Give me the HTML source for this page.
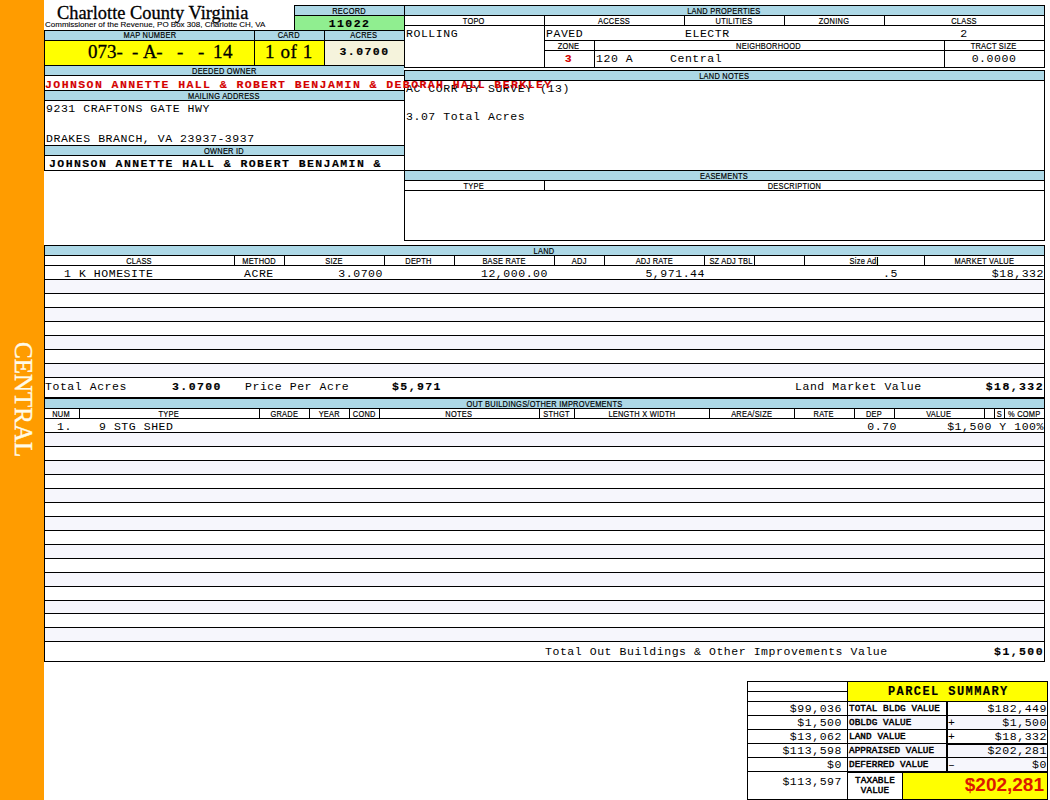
<!DOCTYPE html>
<html><head><meta charset="utf-8"><style>
html,body{margin:0;padding:0;overflow:hidden;}
body{width:1050px;height:800px;overflow:hidden;position:relative;background:#fff;}
.f{position:absolute;}
.t{position:absolute;white-space:pre;line-height:20px;height:20px;color:#000;z-index:2;}
.pb{font-family:"Liberation Mono",monospace;font-size:9.3px;font-weight:normal;letter-spacing:0.1px;-webkit-text-stroke:0.45px #000;}
.m{font-family:"Liberation Mono",monospace;font-size:11.5px;letter-spacing:0.55px;}
.mb{font-family:"Liberation Mono",monospace;font-size:11.5px;font-weight:bold;letter-spacing:1.42px;-webkit-text-stroke:0.15px currentColor;}
.s{font-family:"Liberation Sans",sans-serif;font-size:9.3px;}
.sc{display:inline-block;transform:scaleX(0.8);-webkit-text-stroke:0.2px #000;letter-spacing:0.3px;}
.sb{font-family:"Liberation Sans",sans-serif;font-size:9.3px;}
.serif{font-family:"Liberation Serif",serif;font-size:18.4px;}
.big{font-family:"Liberation Sans",sans-serif;font-size:19px;font-weight:bold;color:#dc1800;}
.central{position:absolute;left:7px;top:342px;width:32px;height:120px;writing-mode:vertical-rl;font-family:"Liberation Serif",serif;font-size:25px;line-height:32px;color:#fffbe8;-webkit-text-stroke:0.4px #fffbe8;}
</style></head><body>
<div class="f" style="left:0px;top:0px;width:44px;height:800px;background:#ff9c00"></div>
<div class="t serif" style="left:57px;top:3px;-webkit-text-stroke:0.3px #000;">Charlotte County Virginia</div>
<div class="t s" style="left:45px;top:15px;font-size:8px;-webkit-text-stroke:0.1px #000;">Commissioner of the Revenue, PO Box 308, Charlotte CH, VA</div>
<div class="f" style="left:295px;top:16px;width:109px;height:14px;background:#90ee90"></div>
<div class="f" style="left:295px;top:6px;width:109px;height:9px;background:#add8e6"></div>
<div class="t sb" style="left:295px;top:1px;width:108px;text-align:center;"><span class="sc">RECORD</span></div>
<div class="t mb" style="left:295px;top:14px;width:109px;text-align:center;">11022</div>
<div class="f" style="left:294px;top:5px;width:751px;height:1px;background:#000"></div>
<div class="f" style="left:294px;top:15px;width:111px;height:1px;background:#000"></div>
<div class="f" style="left:294px;top:5px;width:1px;height:26px;background:#000"></div>
<div class="f" style="left:45px;top:31px;width:359px;height:9px;background:#add8e6"></div>
<div class="t sb" style="left:45px;top:25px;width:209px;text-align:center;"><span class="sc">MAP NUMBER</span></div>
<div class="t sb" style="left:254px;top:25px;width:70px;text-align:center;"><span class="sc">CARD</span></div>
<div class="t sb" style="left:324px;top:25px;width:80px;text-align:center;"><span class="sc">ACRES</span></div>
<div class="f" style="left:45px;top:41px;width:279px;height:24px;background:#ffff00"></div>
<div class="f" style="left:325px;top:41px;width:79px;height:24px;background:#f5f3dc"></div>
<div class="f" style="left:44px;top:30px;width:361px;height:1px;background:#000"></div>
<div class="f" style="left:44px;top:40px;width:361px;height:1px;background:#000"></div>
<div class="f" style="left:44px;top:65px;width:361px;height:1px;background:#000"></div>
<div class="f" style="left:254px;top:30px;width:1px;height:36px;background:#000"></div>
<div class="f" style="left:324px;top:30px;width:1px;height:36px;background:#000"></div>
<div class="t serif" style="left:88px;top:42px;font-size:19px;letter-spacing:0.6px;-webkit-text-stroke:0.3px #000;letter-spacing:0;">073-</div>
<div class="t serif" style="left:132px;top:42px;font-size:19px;letter-spacing:0.6px;-webkit-text-stroke:0.3px #000;">-</div>
<div class="t serif" style="left:143px;top:42px;font-size:19px;letter-spacing:0.6px;-webkit-text-stroke:0.3px #000;letter-spacing:-0.5px;">A-</div>
<div class="t serif" style="left:177px;top:42px;font-size:19px;letter-spacing:0.6px;-webkit-text-stroke:0.3px #000;">-</div>
<div class="t serif" style="left:198px;top:42px;font-size:19px;letter-spacing:0.6px;-webkit-text-stroke:0.3px #000;">-</div>
<div class="t serif" style="left:213px;top:42px;font-size:19px;letter-spacing:0.6px;-webkit-text-stroke:0.3px #000;">14</div>
<div class="t serif" style="left:254px;top:42px;width:70px;text-align:center;font-size:19px;letter-spacing:0.6px;-webkit-text-stroke:0.3px #000;">1 of 1</div>
<div class="t mb" style="left:325px;top:42px;width:79px;text-align:center;">3.0700</div>
<div class="f" style="left:45px;top:66px;width:359px;height:9px;background:#add8e6"></div>
<div class="t sb" style="left:45px;top:61px;width:358px;text-align:center;"><span class="sc">DEEDED OWNER</span></div>
<div class="f" style="left:44px;top:75px;width:361px;height:1px;background:#000"></div>
<div class="t mb" style="left:45px;top:75px;color:#d40000;z-index:5;">JOHNSON ANNETTE HALL &amp; ROBERT BENJAMIN &amp; DEBORAH HALL BERKLEY</div>
<div class="f" style="left:44px;top:90px;width:361px;height:1px;background:#000"></div>
<div class="f" style="left:45px;top:91px;width:359px;height:9px;background:#add8e6"></div>
<div class="t sb" style="left:45px;top:86px;width:358px;text-align:center;"><span class="sc">MAILING ADDRESS</span></div>
<div class="f" style="left:44px;top:100px;width:361px;height:1px;background:#000"></div>
<div class="t m" style="left:46px;top:99px;">9231 CRAFTONS GATE HWY</div>
<div class="t m" style="left:46px;top:129px;">DRAKES BRANCH, VA 23937-3937</div>
<div class="f" style="left:44px;top:145px;width:361px;height:1px;background:#000"></div>
<div class="f" style="left:45px;top:146px;width:359px;height:9px;background:#add8e6"></div>
<div class="t sb" style="left:45px;top:141px;width:358px;text-align:center;"><span class="sc">OWNER ID</span></div>
<div class="f" style="left:44px;top:155px;width:361px;height:1px;background:#000"></div>
<div class="t mb" style="left:49px;top:154px;">JOHNSON ANNETTE HALL &amp; ROBERT BENJAMIN &amp;</div>
<div class="f" style="left:44px;top:170px;width:361px;height:1px;background:#000"></div>
<div class="f" style="left:44px;top:30px;width:1px;height:141px;background:#000"></div>
<div class="f" style="left:405px;top:6px;width:639px;height:9px;background:#add8e6"></div>
<div class="t sb" style="left:405px;top:1px;width:638px;text-align:center;"><span class="sc">LAND PROPERTIES</span></div>
<div class="f" style="left:404px;top:15px;width:641px;height:1px;background:#000"></div>
<div class="t s" style="left:404px;top:11px;width:140px;text-align:center;"><span class="sc">TOPO</span></div>
<div class="t s" style="left:544px;top:11px;width:140px;text-align:center;"><span class="sc">ACCESS</span></div>
<div class="t s" style="left:684px;top:11px;width:100px;text-align:center;"><span class="sc">UTILITIES</span></div>
<div class="t s" style="left:784px;top:11px;width:100px;text-align:center;"><span class="sc">ZONING</span></div>
<div class="t s" style="left:884px;top:11px;width:160px;text-align:center;"><span class="sc">CLASS</span></div>
<div class="f" style="left:404px;top:25px;width:641px;height:1px;background:#000"></div>
<div class="f" style="left:544px;top:15px;width:1px;height:53px;background:#000"></div>
<div class="f" style="left:684px;top:15px;width:1px;height:11px;background:#000"></div>
<div class="f" style="left:784px;top:15px;width:1px;height:11px;background:#000"></div>
<div class="f" style="left:884px;top:15px;width:1px;height:11px;background:#000"></div>
<div class="t m" style="left:406px;top:24px;">ROLLING</div>
<div class="t m" style="left:546px;top:24px;">PAVED</div>
<div class="t m" style="left:685px;top:24px;">ELECTR</div>
<div class="t m" style="left:884px;top:24px;width:160px;text-align:center;">2</div>
<div class="f" style="left:544px;top:40px;width:501px;height:1px;background:#000"></div>
<div class="t s" style="left:544px;top:36px;width:50px;text-align:center;"><span class="sc">ZONE</span></div>
<div class="t sb" style="left:594px;top:36px;width:350px;text-align:center;"><span class="sc">NEIGHBORHOOD</span></div>
<div class="t sb" style="left:944px;top:36px;width:100px;text-align:center;"><span class="sc">TRACT SIZE</span></div>
<div class="f" style="left:544px;top:50px;width:501px;height:1px;background:#000"></div>
<div class="f" style="left:594px;top:40px;width:1px;height:28px;background:#000"></div>
<div class="f" style="left:944px;top:40px;width:1px;height:28px;background:#000"></div>
<div class="t mb" style="left:544px;top:49px;width:50px;text-align:center;color:#d40000;">3</div>
<div class="t m" style="left:596px;top:49px;">120 A</div>
<div class="t m" style="left:670px;top:49px;">Central</div>
<div class="t m" style="left:944px;top:49px;width:100px;text-align:center;">0.0000</div>
<div class="f" style="left:404px;top:67px;width:641px;height:1px;background:#000"></div>
<div class="f" style="left:404px;top:5px;width:1px;height:63px;background:#000"></div>
<div class="f" style="left:1044px;top:5px;width:1px;height:63px;background:#000"></div>
<div class="f" style="left:404px;top:70px;width:641px;height:1px;background:#000"></div>
<div class="f" style="left:405px;top:71px;width:639px;height:9px;background:#add8e6"></div>
<div class="t sb" style="left:405px;top:66px;width:638px;text-align:center;"><span class="sc">LAND NOTES</span></div>
<div class="f" style="left:404px;top:80px;width:641px;height:1px;background:#000"></div>
<div class="t m" style="left:406px;top:79px;">AC CORR BY SURVEY (13)</div>
<div class="t m" style="left:406px;top:107px;">3.07 Total Acres</div>
<div class="f" style="left:44px;top:170px;width:1001px;height:1px;background:#000"></div>
<div class="f" style="left:404px;top:70px;width:1px;height:171px;background:#000"></div>
<div class="f" style="left:1044px;top:70px;width:1px;height:171px;background:#000"></div>
<div class="f" style="left:405px;top:171px;width:639px;height:9px;background:#add8e6"></div>
<div class="t sb" style="left:405px;top:166px;width:638px;text-align:center;"><span class="sc">EASEMENTS</span></div>
<div class="f" style="left:404px;top:180px;width:641px;height:1px;background:#000"></div>
<div class="t sb" style="left:404px;top:176px;width:140px;text-align:center;"><span class="sc">TYPE</span></div>
<div class="t sb" style="left:544px;top:176px;width:500px;text-align:center;"><span class="sc">DESCRIPTION</span></div>
<div class="f" style="left:544px;top:180px;width:1px;height:11px;background:#000"></div>
<div class="f" style="left:404px;top:190px;width:641px;height:1px;background:#000"></div>
<div class="f" style="left:404px;top:240px;width:641px;height:1px;background:#000"></div>
<div class="f" style="left:45px;top:246px;width:999px;height:9px;background:#add8e6"></div>
<div class="t sb" style="left:45px;top:241px;width:998px;text-align:center;"><span class="sc">LAND</span></div>
<div class="f" style="left:44px;top:245px;width:1001px;height:1px;background:#000"></div>
<div class="f" style="left:44px;top:255px;width:1001px;height:1px;background:#000"></div>
<div class="f" style="left:44px;top:265px;width:1001px;height:1px;background:#000"></div>
<div class="f" style="left:234px;top:255px;width:1px;height:11px;background:#000"></div>
<div class="f" style="left:284px;top:255px;width:1px;height:11px;background:#000"></div>
<div class="f" style="left:384px;top:255px;width:1px;height:11px;background:#000"></div>
<div class="f" style="left:454px;top:255px;width:1px;height:11px;background:#000"></div>
<div class="f" style="left:554px;top:255px;width:1px;height:11px;background:#000"></div>
<div class="f" style="left:604px;top:255px;width:1px;height:11px;background:#000"></div>
<div class="f" style="left:704px;top:255px;width:1px;height:11px;background:#000"></div>
<div class="f" style="left:754px;top:255px;width:1px;height:11px;background:#000"></div>
<div class="f" style="left:804px;top:255px;width:1px;height:11px;background:#000"></div>
<div class="f" style="left:924px;top:255px;width:1px;height:11px;background:#000"></div>
<div class="t sb" style="left:44px;top:251px;width:190px;text-align:center;"><span class="sc">CLASS</span></div>
<div class="t sb" style="left:234px;top:251px;width:50px;text-align:center;"><span class="sc">METHOD</span></div>
<div class="t sb" style="left:284px;top:251px;width:100px;text-align:center;"><span class="sc">SIZE</span></div>
<div class="t sb" style="left:384px;top:251px;width:70px;text-align:center;"><span class="sc">DEPTH</span></div>
<div class="t sb" style="left:454px;top:251px;width:100px;text-align:center;"><span class="sc">BASE RATE</span></div>
<div class="t sb" style="left:554px;top:251px;width:50px;text-align:center;"><span class="sc">ADJ</span></div>
<div class="t sb" style="left:604px;top:251px;width:100px;text-align:center;"><span class="sc">ADJ RATE</span></div>
<div class="t sb" style="left:704px;top:251px;width:50px;text-align:center;"><span class="sc">SZ ADJ TBL</span></div>
<div class="t s" style="left:804px;top:251px;width:120px;text-align:center;"><span class="sc">Size Adj</span></div>
<div class="t sb" style="left:924px;top:251px;width:120px;text-align:center;"><span class="sc">MARKET VALUE</span></div>
<div class="f" style="left:45px;top:280px;width:999px;height:13px;background:#f6f6fc"></div>
<div class="f" style="left:45px;top:308px;width:999px;height:13px;background:#f6f6fc"></div>
<div class="f" style="left:45px;top:336px;width:999px;height:13px;background:#f6f6fc"></div>
<div class="f" style="left:45px;top:364px;width:999px;height:13px;background:#f6f6fc"></div>
<div class="f" style="left:44px;top:279px;width:1001px;height:1px;background:#000"></div>
<div class="f" style="left:44px;top:293px;width:1001px;height:1px;background:#000"></div>
<div class="f" style="left:44px;top:307px;width:1001px;height:1px;background:#000"></div>
<div class="f" style="left:44px;top:321px;width:1001px;height:1px;background:#000"></div>
<div class="f" style="left:44px;top:335px;width:1001px;height:1px;background:#000"></div>
<div class="f" style="left:44px;top:349px;width:1001px;height:1px;background:#000"></div>
<div class="f" style="left:44px;top:363px;width:1001px;height:1px;background:#000"></div>
<div class="f" style="left:44px;top:377px;width:1001px;height:1px;background:#000"></div>
<div class="t m" style="left:64px;top:264px;">1 K HOMESITE</div>
<div class="t m" style="left:244px;top:264px;">ACRE</div>
<div class="t m" style="right:667px;top:264px;text-align:right;">3.0700</div>
<div class="t m" style="right:502px;top:264px;text-align:right;">12,000.00</div>
<div class="t m" style="right:345px;top:264px;text-align:right;">5,971.44</div>
<div class="t m" style="right:152px;top:264px;text-align:right;">.5</div>
<div class="t m" style="right:6px;top:264px;text-align:right;">$18,332</div>
<div class="t m" style="left:45px;top:377px;">Total Acres</div>
<div class="t mb" style="left:172px;top:377px;">3.0700</div>
<div class="t m" style="left:245px;top:377px;">Price Per Acre</div>
<div class="t mb" style="left:392px;top:377px;">$5,971</div>
<div class="t m" style="left:795px;top:377px;">Land Market Value</div>
<div class="f" style="left:877px;top:257px;width:1px;height:8px;background:#000"></div>
<div class="t mb" style="right:6px;top:377px;text-align:right;">$18,332</div>
<div class="f" style="left:44px;top:397px;width:1001px;height:1px;background:#000"></div>
<div class="f" style="left:44px;top:245px;width:1px;height:153px;background:#000"></div>
<div class="f" style="left:1044px;top:245px;width:1px;height:153px;background:#000"></div>
<div class="f" style="left:44px;top:398px;width:1001px;height:1px;background:#000"></div>
<div class="f" style="left:45px;top:399px;width:999px;height:9px;background:#add8e6"></div>
<div class="t sb" style="left:45px;top:394px;width:998px;text-align:center;"><span class="sc">OUT BUILDINGS/OTHER IMPROVEMENTS</span></div>
<div class="f" style="left:44px;top:408px;width:1001px;height:1px;background:#000"></div>
<div class="f" style="left:44px;top:418px;width:1001px;height:1px;background:#000"></div>
<div class="f" style="left:79px;top:408px;width:1px;height:11px;background:#000"></div>
<div class="f" style="left:259px;top:408px;width:1px;height:11px;background:#000"></div>
<div class="f" style="left:309px;top:408px;width:1px;height:11px;background:#000"></div>
<div class="f" style="left:349px;top:408px;width:1px;height:11px;background:#000"></div>
<div class="f" style="left:379px;top:408px;width:1px;height:11px;background:#000"></div>
<div class="f" style="left:539px;top:408px;width:1px;height:11px;background:#000"></div>
<div class="f" style="left:574px;top:408px;width:1px;height:11px;background:#000"></div>
<div class="f" style="left:709px;top:408px;width:1px;height:11px;background:#000"></div>
<div class="f" style="left:794px;top:408px;width:1px;height:11px;background:#000"></div>
<div class="f" style="left:854px;top:408px;width:1px;height:11px;background:#000"></div>
<div class="f" style="left:894px;top:408px;width:1px;height:11px;background:#000"></div>
<div class="f" style="left:984px;top:408px;width:1px;height:11px;background:#000"></div>
<div class="f" style="left:994px;top:408px;width:1px;height:11px;background:#000"></div>
<div class="f" style="left:1004px;top:408px;width:1px;height:11px;background:#000"></div>
<div class="t sb" style="left:44px;top:404px;width:35px;text-align:center;"><span class="sc">NUM</span></div>
<div class="t sb" style="left:79px;top:404px;width:180px;text-align:center;"><span class="sc">TYPE</span></div>
<div class="t sb" style="left:259px;top:404px;width:50px;text-align:center;"><span class="sc">GRADE</span></div>
<div class="t sb" style="left:309px;top:404px;width:40px;text-align:center;"><span class="sc">YEAR</span></div>
<div class="t sb" style="left:349px;top:404px;width:30px;text-align:center;"><span class="sc">COND</span></div>
<div class="t sb" style="left:379px;top:404px;width:160px;text-align:center;"><span class="sc">NOTES</span></div>
<div class="t sb" style="left:539px;top:404px;width:35px;text-align:center;"><span class="sc">STHGT</span></div>
<div class="t sb" style="left:574px;top:404px;width:135px;text-align:center;"><span class="sc">LENGTH X WIDTH</span></div>
<div class="t sb" style="left:709px;top:404px;width:85px;text-align:center;"><span class="sc">AREA/SIZE</span></div>
<div class="t sb" style="left:794px;top:404px;width:60px;text-align:center;"><span class="sc">RATE</span></div>
<div class="t sb" style="left:854px;top:404px;width:40px;text-align:center;"><span class="sc">DEP</span></div>
<div class="t sb" style="left:894px;top:404px;width:90px;text-align:center;"><span class="sc">VALUE</span></div>
<div class="t sb" style="left:994px;top:404px;width:10px;text-align:center;"><span class="sc">S</span></div>
<div class="t sb" style="left:1004px;top:404px;width:40px;text-align:center;"><span class="sc">% COMP</span></div>
<div class="f" style="left:45px;top:433px;width:999px;height:13px;background:#f6f6fc"></div>
<div class="f" style="left:45px;top:461px;width:999px;height:13px;background:#f6f6fc"></div>
<div class="f" style="left:45px;top:489px;width:999px;height:13px;background:#f6f6fc"></div>
<div class="f" style="left:45px;top:517px;width:999px;height:13px;background:#f6f6fc"></div>
<div class="f" style="left:45px;top:545px;width:999px;height:13px;background:#f6f6fc"></div>
<div class="f" style="left:45px;top:573px;width:999px;height:13px;background:#f6f6fc"></div>
<div class="f" style="left:45px;top:601px;width:999px;height:12px;background:#f6f6fc"></div>
<div class="f" style="left:45px;top:628px;width:999px;height:13px;background:#f6f6fc"></div>
<div class="f" style="left:44px;top:432px;width:1001px;height:1px;background:#000"></div>
<div class="f" style="left:44px;top:446px;width:1001px;height:1px;background:#000"></div>
<div class="f" style="left:44px;top:460px;width:1001px;height:1px;background:#000"></div>
<div class="f" style="left:44px;top:474px;width:1001px;height:1px;background:#000"></div>
<div class="f" style="left:44px;top:488px;width:1001px;height:1px;background:#000"></div>
<div class="f" style="left:44px;top:502px;width:1001px;height:1px;background:#000"></div>
<div class="f" style="left:44px;top:516px;width:1001px;height:1px;background:#000"></div>
<div class="f" style="left:44px;top:530px;width:1001px;height:1px;background:#000"></div>
<div class="f" style="left:44px;top:544px;width:1001px;height:1px;background:#000"></div>
<div class="f" style="left:44px;top:558px;width:1001px;height:1px;background:#000"></div>
<div class="f" style="left:44px;top:572px;width:1001px;height:1px;background:#000"></div>
<div class="f" style="left:44px;top:586px;width:1001px;height:1px;background:#000"></div>
<div class="f" style="left:44px;top:600px;width:1001px;height:1px;background:#000"></div>
<div class="f" style="left:44px;top:613px;width:1001px;height:1px;background:#000"></div>
<div class="f" style="left:44px;top:627px;width:1001px;height:1px;background:#000"></div>
<div class="f" style="left:44px;top:641px;width:1001px;height:1px;background:#000"></div>
<div class="t m" style="left:57px;top:417px;">1.</div>
<div class="t m" style="left:99px;top:417px;">9 STG SHED</div>
<div class="t m" style="right:153px;top:417px;text-align:right;">0.70</div>
<div class="t m" style="right:6px;top:417px;text-align:right;">$1,500 Y 100%</div>
<div class="t m" style="left:545px;top:642px;">Total Out Buildings &amp; Other Improvements Value</div>
<div class="t mb" style="right:6px;top:642px;text-align:right;">$1,500</div>
<div class="f" style="left:44px;top:661px;width:1001px;height:1px;background:#000"></div>
<div class="f" style="left:44px;top:398px;width:1px;height:264px;background:#000"></div>
<div class="f" style="left:1044px;top:398px;width:1px;height:264px;background:#000"></div>
<div class="f" style="left:848px;top:682px;width:199px;height:19px;background:#ffff00"></div>
<div class="t mb" style="left:888px;top:682px;font-size:12px;">PARCEL SUMMARY</div>
<div class="f" style="left:747px;top:681px;width:301px;height:1px;background:#000"></div>
<div class="f" style="left:747px;top:691px;width:101px;height:1px;background:#000"></div>
<div class="f" style="left:747px;top:701px;width:301px;height:1px;background:#000"></div>
<div class="f" style="left:848px;top:716px;width:98px;height:13px;background:#f6f6fc"></div>
<div class="f" style="left:948px;top:716px;width:99px;height:13px;background:#f6f6fc"></div>
<div class="f" style="left:848px;top:744px;width:98px;height:27px;background:#f6f6fc"></div>
<div class="f" style="left:948px;top:745px;width:99px;height:26px;background:#f6f6fc"></div>
<div class="f" style="left:747px;top:715px;width:301px;height:1px;background:#000"></div>
<div class="f" style="left:747px;top:729px;width:301px;height:1px;background:#000"></div>
<div class="f" style="left:747px;top:757px;width:301px;height:1px;background:#000"></div>
<div class="f" style="left:747px;top:743px;width:301px;height:1px;background:#000"></div>
<div class="f" style="left:947px;top:744px;width:101px;height:1px;background:#000"></div>
<div class="f" style="left:747px;top:771px;width:301px;height:1px;background:#000"></div>
<div class="f" style="left:847px;top:772px;width:201px;height:1px;background:#000"></div>
<div class="f" style="left:903px;top:773px;width:144px;height:26px;background:#ffff00"></div>
<div class="f" style="left:747px;top:681px;width:1px;height:119px;background:#000"></div>
<div class="f" style="left:847px;top:681px;width:1px;height:119px;background:#000"></div>
<div class="f" style="left:946px;top:701px;width:2px;height:71px;background:#000"></div>
<div class="f" style="left:902px;top:771px;width:1px;height:29px;background:#000"></div>
<div class="f" style="left:1047px;top:681px;width:1px;height:119px;background:#000"></div>
<div class="f" style="left:747px;top:799px;width:301px;height:1px;background:#000"></div>
<div class="t m" style="right:208px;top:699px;text-align:right;">$99,036</div>
<div class="t pb" style="left:849px;top:699px;">TOTAL BLDG VALUE</div>
<div class="t m" style="right:3px;top:699px;text-align:right;">$182,449</div>
<div class="t m" style="right:208px;top:713px;text-align:right;">$1,500</div>
<div class="t pb" style="left:849px;top:713px;">OBLDG VALUE</div>
<div class="t m" style="left:948px;top:713px;">+</div>
<div class="t m" style="right:3px;top:713px;text-align:right;">$1,500</div>
<div class="t m" style="right:208px;top:727px;text-align:right;">$13,062</div>
<div class="t pb" style="left:849px;top:727px;">LAND VALUE</div>
<div class="t m" style="left:948px;top:727px;">+</div>
<div class="t m" style="right:3px;top:727px;text-align:right;">$18,332</div>
<div class="t m" style="right:208px;top:741px;text-align:right;">$113,598</div>
<div class="t pb" style="left:849px;top:741px;">APPRAISED VALUE</div>
<div class="t m" style="right:3px;top:741px;text-align:right;">$202,281</div>
<div class="t m" style="right:208px;top:755px;text-align:right;">$0</div>
<div class="t pb" style="left:849px;top:755px;">DEFERRED VALUE</div>
<div class="t m" style="left:948px;top:755px;">&#8211;</div>
<div class="t m" style="right:3px;top:755px;text-align:right;">$0</div>
<div class="t m" style="right:208px;top:772px;text-align:right;">$113,597</div>
<div class="t pb" style="left:847px;top:771px;width:56px;text-align:center;">TAXABLE</div>
<div class="t pb" style="left:847px;top:781px;width:56px;text-align:center;">VALUE</div>
<div class="t big" style="right:6px;top:775px;text-align:right;">$202,281</div>
<div class="central">CENTRAL</div>
</body></html>
